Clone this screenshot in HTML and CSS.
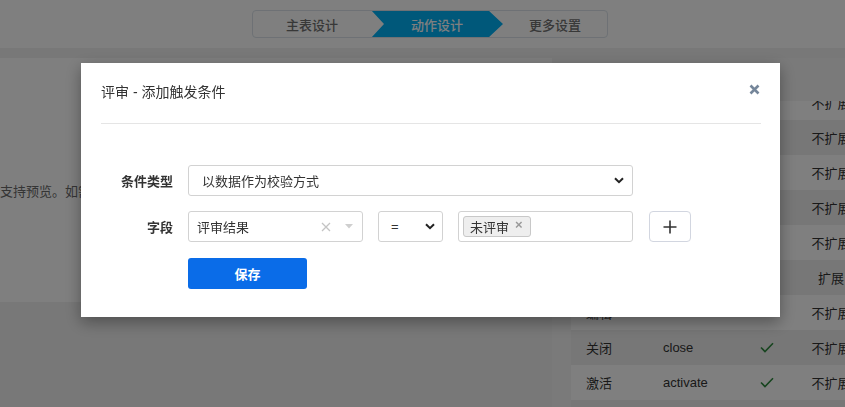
FILE: index.html
```html
<!DOCTYPE html>
<html lang="zh">
<head>
<meta charset="utf-8">
<title>评审 - 添加触发条件</title>
<link rel="stylesheet" href="styles.css">
</head>
<body>
<header class="topbar">
  <nav class="stepper">
    <div class="step">主表设计</div>
    <div class="step step-active">动作设计</div>
    <div class="step step-last">更多设置</div>
  </nav>
</header>
<main class="main">
  <section class="left-panel">
    <p class="hint">当前表单不支持预览。如需预览请先保存表单设计。</p>
  </section>
  <section class="right-panel">
    <div class="table-wrap">
      <div class="table">
        <div class="row"><span>提交</span><span>submit</span><span class="chk"></span><span class="ext">不扩展</span></div>
        <div class="row"><span>审核</span><span>audit</span><span class="chk"></span><span class="ext">不扩展</span></div>
        <div class="row"><span>退回</span><span>reject</span><span class="chk"></span><span class="ext">不扩展</span></div>
        <div class="row"><span>撤回</span><span>revoke</span><span class="chk"></span><span class="ext">不扩展</span></div>
        <div class="row"><span>删除</span><span>delete</span><span class="chk"></span><span class="ext">不扩展</span></div>
        <div class="row"><span>评审</span><span>review</span><span class="chk"></span><span class="ext">扩展</span></div>
        <div class="row"><span>编辑</span><span>edit</span><span class="chk"></span><span class="ext">不扩展</span></div>
        <div class="row"><span>关闭</span><span>close</span><span class="chk"><svg width="14" height="11" viewBox="0 0 14 11"><path d="M1 5.5 L5 9.5 L13 1.2" fill="none" stroke="#2f8a3f" stroke-width="1.6"/></svg></span><span class="ext">不扩展</span></div>
        <div class="row"><span>激活</span><span>activate</span><span class="chk"><svg width="14" height="11" viewBox="0 0 14 11"><path d="M1 5.5 L5 9.5 L13 1.2" fill="none" stroke="#2f8a3f" stroke-width="1.6"/></svg></span><span class="ext">不扩展</span></div>
        <div class="row"><span></span><span></span><span class="chk"></span><span class="ext"></span></div>
      </div>
    </div>
  </section>
</main>

<div class="overlay"></div>

<div class="modal">
  <div class="modal-head">
    <h2 class="modal-title">评审 - 添加触发条件</h2>
    <span class="close"><svg width="11" height="11" viewBox="0 0 11 11"><path d="M1.5 1.5 L9.5 9.5 M9.5 1.5 L1.5 9.5" stroke="#75869a" stroke-width="2.6" stroke-linecap="butt"/></svg></span>
  </div>
  <div class="divider"></div>
  <div class="form">
    <div class="form-row">
      <label class="label">条件类型</label>
      <div class="select select-wide">
        <span>以数据作为校验方式</span>
        <svg class="chev" width="10" height="7" viewBox="0 0 10 7"><path d="M1 1.2 L5 5.2 L9 1.2" fill="none" stroke="#222" stroke-width="2"/></svg>
      </div>
    </div>

    <div class="form-row">
      <label class="label">字段</label>
      <div class="select select2">
        <span>评审结果</span>
        <span class="s2-tools">
          <svg width="10" height="10" viewBox="0 0 10 10"><path d="M1 1 L9 9 M9 1 L1 9" stroke="#c4c4c4" stroke-width="1.3"/></svg>
          <svg width="8" height="5" viewBox="0 0 8 5"><path d="M0 0 L8 0 L4 4.5 Z" fill="#cfcfcf"/></svg>
        </span>
      </div>
      <div class="select select-op">
        <span>=</span>
        <svg class="chev" width="10" height="7" viewBox="0 0 10 7"><path d="M1 1.2 L5 5.2 L9 1.2" fill="none" stroke="#222" stroke-width="2"/></svg>
      </div>
      <div class="multi">
        <span class="tag">未评审<span class="tag-x">×</span></span>
      </div>
      <button class="plus" type="button"><svg width="14" height="14" viewBox="0 0 14 14"><path d="M7 0.5 V13.5 M0.5 7 H13.5" stroke="#333" stroke-width="1.6"/></svg></button>
    </div>

    <div class="form-row actions">
      <button class="save" type="button">保存</button>
    </div>
  </div>
</div>
</body>
</html>
```

FILE: styles.css
```css
* { box-sizing: border-box; }

html, body {
  margin: 0;
  padding: 0;
}

body {
  width: 845px;
  height: 407px;
  overflow: hidden;
  background: #f0f0f0;
  font-family: "Liberation Sans", "Noto Sans CJK SC", sans-serif;
  font-size: 13px;
  color: #333;
}

/* ---------- top bar / stepper ---------- */
.topbar {
  height: 48px;
  background: #fff;
  display: flex;
  align-items: center;
  padding-left: 252px;
}

.stepper {
  width: 356px;
  height: 28px;
  border: 1px solid #dce2ea;
  border-radius: 4px;
  display: flex;
  overflow: hidden;
}

.step {
  width: 118px;
  display: flex;
  align-items: center;
  justify-content: center;
  font-size: 13px;
  color: #707070;
  font-weight: 500;
}

.step-active {
  width: 132px;
  background: #00b0f5;
  color: #fff;
  margin-top: -1px;
  margin-bottom: -1px;
  clip-path: polygon(0 0, 117px 0, 132px 50%, 117px 100%, 0 100%, 13px 50%);
}

.step-last {
  flex: 1;
}

/* ---------- background content ---------- */
.main {
  display: flex;
  margin-top: 10px;
}

.left-panel {
  width: 552px;
  height: 244px;
  background: #fff;
  padding-top: 125px;
  overflow: hidden;
}

.hint {
  margin: 0 0 0 -65px;
  white-space: nowrap;
  font-size: 13px;
  line-height: 18px;
  color: #6a6a6a;
}

.right-panel {
  width: 293px;
  height: 349px;
  background: #f4f4f4;
  padding: 43px 0 0 19px;
}

.table-wrap {
  height: 306px;
  overflow: hidden;
}

.table {
  margin-top: -16px;
  width: 302px;
}

.row {
  height: 35px;
  display: grid;
  grid-template-columns: 77px 82px 44px 84px;
  align-items: center;
  padding-left: 15px;
  background: #fff;
  font-size: 13px;
  color: #333;
}

.row:nth-child(even) {
  background: #eeeeee;
}

.chk, .ext {
  display: flex;
  justify-content: center;
  align-items: center;
}

/* ---------- overlay + modal ---------- */
.overlay {
  position: fixed;
  inset: 0;
  background: rgba(0, 0, 0, 0.5);
}

.modal {
  position: fixed;
  left: 81px;
  top: 63px;
  width: 699px;
  height: 254px;
  background: #fff;
  padding: 19px 19px 0 20px;
  box-shadow: 0 5px 15px rgba(0, 0, 0, 0.35);
}

.modal-head {
  height: 20px;
  display: flex;
  align-items: center;
  justify-content: space-between;
}

.modal-title {
  margin: 0;
  font-size: 14px;
  font-weight: normal;
  line-height: 20px;
  color: #333;
}

.close {
  display: flex;
  margin-right: 1px;
  margin-top: -5px;
}

.divider {
  margin-top: 21px;
  height: 1px;
  background: #e5e5e5;
}

.form {
  margin-top: 41px;
  display: flex;
  flex-direction: column;
  gap: 15px;
}

.form-row {
  display: flex;
  align-items: center;
}

.label {
  width: 72px;
  margin-right: 15px;
  text-align: right;
  font-weight: bold;
  font-size: 13px;
  color: #333;
}

.select {
  height: 31px;
  border: 1px solid #d2d2d2;
  border-radius: 3px;
  display: flex;
  align-items: center;
  justify-content: space-between;
  font-size: 13px;
  color: #333;
  background: #fff;
}

.select-wide {
  width: 445px;
  padding: 0 8px 0 13px;
}

.select2 {
  width: 175px;
  padding: 0 9px 0 8px;
}

.s2-tools {
  display: flex;
  align-items: center;
  gap: 14px;
}

.select-op {
  width: 65px;
  margin-left: 15px;
  padding: 0 7px 0 12px;
}

.multi {
  width: 175px;
  height: 31px;
  margin-left: 15px;
  border: 1px solid #d2d2d2;
  border-radius: 3px;
  padding: 4px 4px;
  display: flex;
  align-items: flex-start;
}

.tag {
  height: 21px;
  display: inline-flex;
  align-items: center;
  padding: 0 7px 0 6px;
  background: #eeeeee;
  border: 1px solid #c8c8c8;
  border-radius: 3px;
  font-size: 13px;
  color: #333;
}

.tag-x {
  margin-left: 6px;
  color: #999;
  font-size: 13px;
  font-weight: bold;
  line-height: 1;
  align-self: flex-start;
  margin-top: 1px;
}

.plus {
  margin-left: 16px;
  width: 42px;
  height: 31px;
  border: 1px solid #d2d6e0;
  border-radius: 4px;
  background: #fff;
  display: flex;
  align-items: center;
  justify-content: center;
  padding: 0;
}

.actions {
  padding-left: 87px;
  margin-top: 1px;
}

.save {
  width: 119px;
  height: 31px;
  border: none;
  border-radius: 3px;
  background: #0a6ce8;
  color: #fff;
  font-family: "Liberation Sans", "Noto Sans CJK SC", sans-serif;
  font-size: 13px;
  font-weight: bold;
  padding: 0;
}
```
